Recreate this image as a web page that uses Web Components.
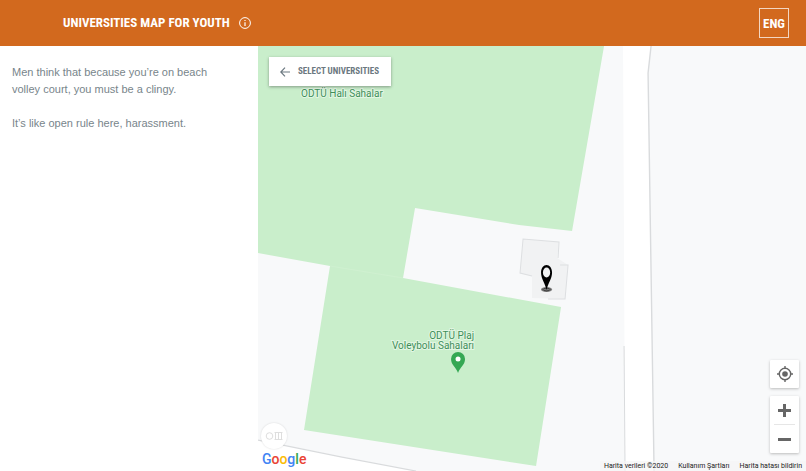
<!DOCTYPE html>
<html lang="en">
<head>
<meta charset="utf-8">
<meta name="viewport" content="width=device-width, initial-scale=1">
<title>Universities Map for Youth</title>
<style>
    html, body { height: 100%; }
    body {
        margin: 0;
        font-family: "Liberation Sans", Arial, sans-serif;
        --brand: #d2691e;
        --display: "Liberation Sans Narrow", "Arial Narrow", "Roboto Condensed", "Liberation Sans", sans-serif;
    }
    story-panel p { margin: 0 0 17px; }
</style>
</head>
<body>
<map-app>
    <app-header slot="header" lang-code="ENG">UNIVERSITIES MAP FOR YOUTH</app-header>
    <story-panel slot="side">
        <p>Men think that because you’re on beach volley court, you must be a clingy.</p>
        <p>It’s like open rule here, harassment.</p>
    </story-panel>
    <map-view slot="map">
        <back-button slot="top">SELECT UNIVERSITIES</back-button>
        <map-brand slot="brand"></map-brand>
        <map-controls slot="controls"></map-controls>
        <map-credits slot="credits"></map-credits>
    </map-view>
</map-app>

<script>
function define(name, html) {
    customElements.define(name, class extends HTMLElement {
        constructor() {
            super();
            const template = document.createElement('template');
            template.innerHTML = html;
            this.attachShadow({mode: 'open'})
                .appendChild(template.content.cloneNode(true));
        }
        connectedCallback() {
            const code = this.shadowRoot.querySelector('.code');
            if (code) code.textContent = this.getAttribute('lang-code');
        }
    });
}

define('map-app', `
    <style>
        :host { display: flex; flex-direction: column; min-height: 100%; }
        main { flex: 1; display: grid; grid-template-columns: 32% 1fr; }
        main > * { min-width: 0; }
    </style>
    <slot name="header"></slot>
    <main>
        <slot name="side"></slot>
        <slot name="map"></slot>
    </main>
`);

define('app-header', `
    <style>
        :host {
            display: flex;
            align-items: center;
            justify-content: space-between;
            padding: 8px 17px 8px 63px;
            background: var(--brand);
            color: #fff;
            font-family: var(--display);
            font-weight: bold;
        }
        .title { display: flex; align-items: center; gap: 9px; }
        h1 { margin: 0; font-size: 13px; line-height: 20px; white-space: nowrap; }
        button { padding: 0; border: 0; background: none; color: inherit; font: inherit; cursor: pointer; }
        .info svg { display: block; }
        .code { width: 30px; height: 30px; border: 1px solid #f3d6c2; font-size: 13px; }
    </style>
    <div class="title">
        <h1><slot></slot></h1>
        <button class="info" type="button" aria-label="About">
            <svg width="12" height="12" viewBox="0 0 12 12" fill="none" stroke="#fff">
                <circle cx="6" cy="6" r="5.4"/>
                <path d="M6 5.2V9M6 2.9V4.1" stroke-width="1.2"/>
            </svg>
        </button>
    </div>
    <button class="code" type="button"></button>
`);

define('story-panel', `
    <style>
        :host {
            display: block;
            padding: 18px 40px 0 12px;
            background: #fff;
            color: #78858b;
            font-size: 11px;
            line-height: 17px;
        }
    </style>
    <slot></slot>
`);

define('map-view', `
    <style>
        :host { display: block; position: relative; overflow: hidden; background: #f8f9fa; }
        .canvas { position: absolute; inset: 0; width: 100%; height: 100%; }
        .top { position: absolute; top: 11px; left: 11px; }
        .brand { position: absolute; bottom: 2px; left: 3px; }
        .controls { position: absolute; right: 7px; bottom: 18px; }
        .credits { position: absolute; right: 0; bottom: 0; }
        text {
            font-family: Roboto, sans-serif;
            font-size: 10px;
            fill: #3f8f5a;
            stroke: #e3f6e4;
            stroke-width: 2px;
            paint-order: stroke;
        }
    </style>
    <svg class="canvas" viewBox="0 0 548 425" preserveAspectRatio="xMinYMin slice">
        <!-- roads -->
        <path d="M365 0H393L390 27L396 425H367Z" fill="#fff"/>
        <path d="M0 394L158 425H0Z" fill="#fff"/>
        <g fill="none" stroke="#d9dbdd">
            <path d="M393 0L390 27L396 425" stroke-width="1.4"/>
            <path d="M366 300L367 425"/>
            <path d="M0 394L84 411L158 425" stroke-width="1.2"/>
        </g>
        <!-- sports fields -->
        <path d="M0 0H346L314 185L261 179L157 162L145 232L303 261L278 420L46 384L72 220L0 207Z" fill="#c9eecb"/>
        <path d="M72 220L145 232" stroke="#cff0d0"/>
        <!-- buildings -->
        <path d="M265 193L301 196L299 212L310 219L307 253L274 252L274 230L262 227Z" fill="#f1f2f3"/>
        <path d="M274 230L262 227L265 193L301 196L300 212M302 219H310L307 253H290" fill="none" stroke="#dddfe1"/>
        <!-- selected place -->
        <ellipse cx="288.5" cy="243.5" rx="5.5" ry="2.5" fill="#777"/>
        <ellipse cx="288.5" cy="243.5" rx="3.5" ry="1.3" fill="none" stroke="#333" stroke-width=".8"/>
        <path d="M288.5 244C287 237 283 233 283 226.5C283 222 285.5 219 288.5 219S294 222 294 226.5C294 233 290 237 288.5 244Z" fill="#000"/>
        <ellipse cx="288.5" cy="226.5" rx="3.6" ry="5" fill="#f1f2f3"/>
        <!-- court pin -->
        <path d="M200 327C198 321 193 319 193 313A7 7 0 0 1 207 313C207 319 202 321 200 327Z" fill="#34a853"/>
        <circle cx="200" cy="313" r="2.5" fill="#fff"/>
        <text x="43" y="51">ODTÜ Halı Sahalar</text>
        <text x="216" y="293" text-anchor="end">ODTÜ Plaj</text>
        <text x="216" y="303" text-anchor="end">Voleybolu Sahaları</text>
    </svg>
    <div class="top"><slot name="top"></slot></div>
    <div class="brand"><slot name="brand"></slot></div>
    <div class="controls"><slot name="controls"></slot></div>
    <div class="credits"><slot name="credits"></slot></div>
`);

define('back-button', `
    <style>
        :host { display: block; }
        button {
            display: flex;
            align-items: center;
            gap: 8px;
            padding: 5px 12px 5px 11px;
            border: 0;
            background: #fff;
            box-shadow: 0 1px 3px rgba(0, 0, 0, .35);
            color: #6b7880;
            font: bold 9px/19px var(--display);
            white-space: nowrap;
            cursor: pointer;
        }
    </style>
    <button type="button">
        <svg width="10" height="10" viewBox="0 0 10 10" fill="none" stroke="#6b7880" stroke-width="1.2">
            <path d="M10 5H1M5 .7L.8 5L5 9.3"/>
        </svg>
        <slot></slot>
    </button>
`);

define('map-brand', `
    <style>
        :host { display: flex; flex-direction: column; align-items: flex-start; }
        .street {
            width: 26px;
            height: 26px;
            padding: 0;
            border: 0;
            border-radius: 50%;
            background: #fff;
            box-shadow: 0 0 2px rgba(0, 0, 0, .15);
        }
        .street svg { display: block; margin: auto; }
        a { padding: 0 1px; font: 500 14px/20px Roboto, sans-serif; text-decoration: none; }
        .b { color: #4285f4; }
        .r { color: #ea4335; }
        .y { color: #fbbc05; }
        .g { color: #34a853; }
    </style>
    <button class="street" type="button" aria-label="Layers">
        <svg width="18" height="10" viewBox="0 0 18 10" fill="none" stroke="#dedede">
            <circle cx="4.5" cy="5" r="3.3"/>
            <path d="M10.5 1.5V8.5M13.5 1.5V8.5M16.5 1.5V8.5M9.5 1.5H17.5M9.5 8.5H17.5"/>
        </svg>
    </button>
    <a href="#google"><span class="b">G</span><span class="r">o</span><span class="y">o</span><span class="b">g</span><span class="g">l</span><span class="r">e</span></a>
`);

define('map-controls', `
    <style>
        :host { display: flex; flex-direction: column; gap: 8px; }
        .card { background: #fff; border-radius: 1px; box-shadow: 0 1px 3px rgba(0, 0, 0, .25); }
        button { display: grid; place-items: center; width: 29px; height: 28px; padding: 0; border: 0; background: none; cursor: pointer; }
        hr { margin: 0 4px; border: 0; border-top: 1px solid #e6e6e6; }
    </style>
    <div class="card">
        <button type="button" aria-label="My location">
            <svg width="16" height="16" viewBox="0 0 16 16" fill="none" stroke="#666" stroke-width="1.4">
                <circle cx="8" cy="8" r="5.7"/>
                <circle cx="8" cy="8" r="2.8" fill="#666" stroke="none"/>
                <path d="M8 0V2.5M8 13.5V16M0 8H2.5M13.5 8H16"/>
            </svg>
        </button>
    </div>
    <div class="card">
        <button type="button" aria-label="Zoom in">
            <svg width="13" height="13" viewBox="0 0 13 13" stroke="#666" stroke-width="3"><path d="M0 6.5H13M6.5 0V13"/></svg>
        </button>
        <hr>
        <button type="button" aria-label="Zoom out">
            <svg width="13" height="13" viewBox="0 0 13 13" stroke="#666" stroke-width="3"><path d="M0 6.5H13"/></svg>
        </button>
    </div>
`);

define('map-credits', `
    <style>
        :host {
            display: flex;
            gap: 10px;
            padding: 0 4px;
            background: rgba(245, 245, 245, .7);
            font: 7px/10px Roboto, sans-serif;
            color: #222;
            white-space: nowrap;
        }
        a { color: inherit; text-decoration: none; }
    </style>
    <span>Harita verileri ©2020</span>
    <a href="#terms">Kullanım Şartları</a>
    <a href="#report">Harita hatası bildirin</a>
`);
</script>
</body>
</html>
